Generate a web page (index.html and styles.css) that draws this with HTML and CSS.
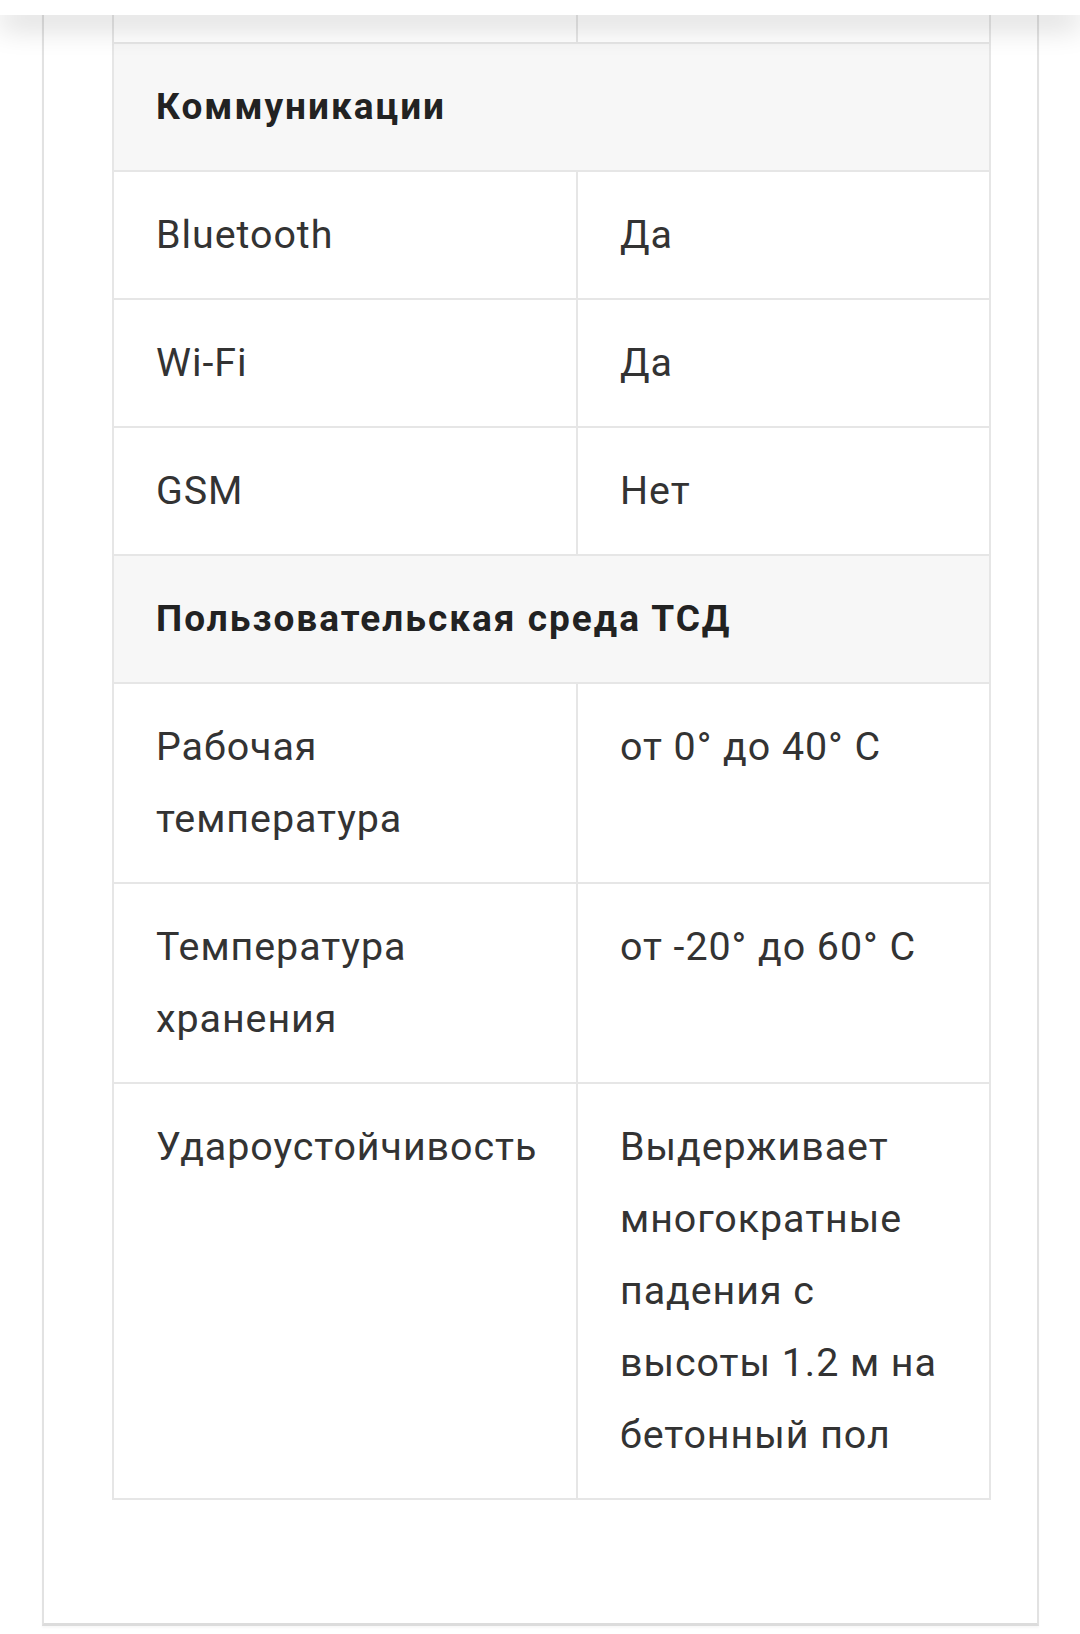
FILE: index.html
```html
<!DOCTYPE html>
<html lang="ru">
<head>
<meta charset="utf-8">
<title>Характеристики</title>
<link rel="stylesheet" href="styles.css">
</head>
<body>
<div class="topbar"></div>
<main class="panel">
  <table class="specs">
    <tr class="spacer"><td></td><td></td></tr>
    <tr class="group"><th colspan="2">Коммуникации</th></tr>
    <tr><td>Bluetooth</td><td>Да</td></tr>
    <tr><td>Wi-Fi</td><td>Да</td></tr>
    <tr><td>GSM</td><td>Нет</td></tr>
    <tr class="group"><th colspan="2">Пользовательская среда ТСД</th></tr>
    <tr><td>Рабочая температура</td><td>от 0° до 40° C</td></tr>
    <tr><td>Температура хранения</td><td>от -20° до 60° C</td></tr>
    <tr><td>Удароустойчивость</td><td>Выдерживает многократные падения с высоты 1.2 м на бетонный пол</td></tr>
  </table>
</main>
</body>
</html>
```
FILE: styles.css
```css
html, body {
  margin: 0;
  padding: 0;
  background: #ffffff;
}

body {
  font-family: Roboto, "Noto Sans", "Liberation Sans", sans-serif;
  color: #333333;
  overflow: hidden;
  height: 1634px;
}

.topbar {
  position: fixed;
  top: 0;
  left: 0;
  right: 0;
  height: 15px;
  background: #ffffff;
  box-shadow: 0 10px 30px rgba(0, 0, 0, 0.22);
  z-index: 10;
}

.panel {
  margin-left: 42px;
  border-left: 2px solid #e2e2e2;
  border-right: 2px solid #e2e2e2;
  border-bottom: 3px solid #dcdcdc;
  box-shadow: 0 2px 2px rgba(0, 0, 0, 0.03);
  padding: 0 46px 123px 68px;
  width: 879px;
}

.specs {
  border-collapse: collapse;
  width: 879px;
  margin-top: -86px;
  table-layout: fixed;
}

.specs td,
.specs th {
  border: 2px solid #e6e6e6;
  padding: 27px 42px;
  line-height: 72px;
  vertical-align: top;
  text-align: left;
}

.specs td {
  font-size: 39.4px;
  font-weight: 400;
  letter-spacing: 0.95px;
  color: #333333;
}

.specs td:first-child {
  width: 378px;
}

.specs .spacer td {
  height: 72px;
}

.specs .group th {
  background: #f7f7f7;
  font-size: 37px;
  font-weight: 700;
  letter-spacing: 2px;
  color: #222222;
}
```
